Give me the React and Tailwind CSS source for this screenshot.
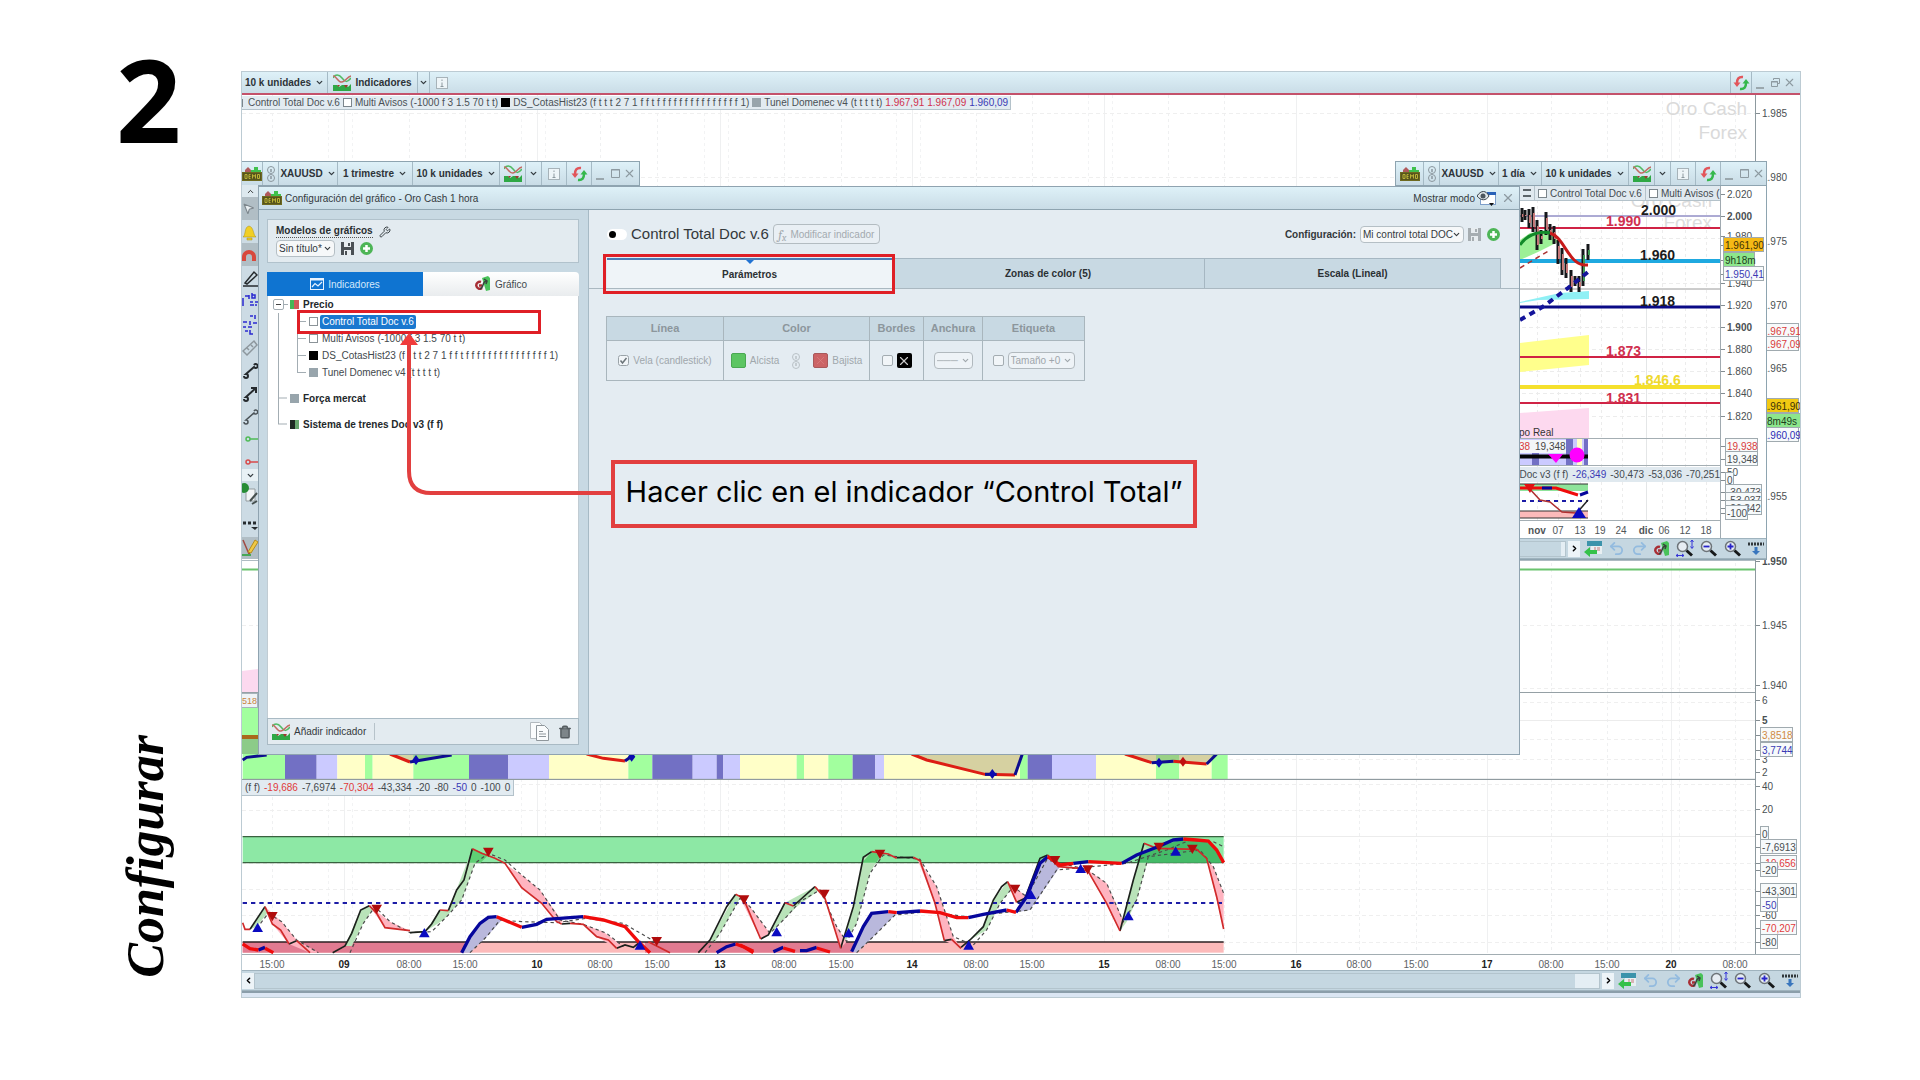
import React from 'react'
import {
  ChevronDown,
  ChevronUp,
  ChevronRight,
  ChevronLeft,
  Wrench,
  Trash2,
  X,
  Undo2,
  Redo2,
  MousePointer2,
} from 'lucide-react'

// ---------------------------------------------------------------------
// Small pixel icons of the trading platform
// ---------------------------------------------------------------------
const DemoIcon = () => (
  <svg width="20" height="16" viewBox="0 0 20 16" className="shrink-0">
    <path d="M3 8V4l3-3 3 3v4z" fill="#b05a5c" />
    <path d="M9 7V4h3V1h4v3h3v3z" fill="#3fc14d" />
    <rect x="0.5" y="6.5" width="19" height="8" fill="#57541c" stroke="#6e6a1f" />
    <path d="M3 8.500v4h2v-4zM8.500 8.500H7v4h1.500M7 10.500h1.500M10.500 12.500v-4l1.500 2 1.500-2v4M15.500 8.500h2v4h-2z" fill="none" stroke="#b9b236" />
  </svg>
)

const LinkIcon = ({ className = 'text-[#8b979e]' }) => (
  <svg width="10" height="16" viewBox="0 0 10 16" fill="none" stroke="currentColor" className={`shrink-0 ${className}`}>
    <circle cx="5" cy="4" r="3.500" />
    <circle cx="5" cy="12" r="3.500" />
    <path d="M5 3v3M5 10v3" strokeWidth="1.500" />
  </svg>
)

const IndicatorIcon = () => (
  <svg width="18" height="17" viewBox="0 0 18 17" className="shrink-0">
    <path d="M0 4C2 0 6 0 9 4s5 5 9 0" fill="none" stroke="#52bb64" strokeWidth="1.500" />
    <path d="M0 2c3-1 5 7 9 6s5-5 9-6" fill="none" stroke="#c46a63" strokeWidth="1.500" />
    <path d="M0 11h4l2 2 3-2h4l2 2 3-3v7H0z" fill="#2fa845" />
    <path d="M4 11h3l-1.500 2zM11 11h4l-2 3z" fill="#9e3a30" />
  </svg>
)

const InfoIcon = () => (
  <svg width="12" height="12" viewBox="0 0 12 12" className="shrink-0">
    <rect x="0.5" y="0.5" width="11" height="11" fill="#eef5f8" stroke="#a7b3b9" />
    <path d="M6 2.500v1.500M6 5.500v4M4.500 9.500h3" stroke="#8d999f" />
  </svg>
)

const RefreshIcon = () => (
  <svg width="17" height="16" viewBox="0 0 17 16" fill="none" strokeWidth="2.500" className="shrink-0">
    <path d="M10 2C5.500 1.500 4 4 4 8" stroke="#e2555b" />
    <path d="M0.500 7.500h7L4 12z" fill="#e2555b" stroke="none" />
    <path d="M7 14c4.500.5 6-2 6-6" stroke="#35b84c" />
    <path d="M9.500 8.500h7L13 4z" fill="#35b84c" stroke="none" />
  </svg>
)

const SaveIcon = ({ className = 'text-[#4a5055]' }) => (
  <svg width="13" height="13" viewBox="0 0 13 13" className={`shrink-0 ${className}`}>
    <path d="M0 0h13v13H0z" fill="currentColor" />
    <path d="M3 0h7v5H3zM3 8h7v5H3z" fill="#e8edf0" />
    <path d="M7 1h2v3H7zM4 9h2v4H4z" fill="currentColor" />
  </svg>
)

const AddIcon = () => (
  <svg width="13" height="13" viewBox="0 0 13 13" className="shrink-0">
    <circle cx="6.500" cy="6.500" r="6.500" fill="#4db556" />
    <path d="M6.500 3v7M3 6.500h7" stroke="#fff" strokeWidth="2.500" />
  </svg>
)

const GearLinkIcon = () => (
  <svg width="16" height="16" viewBox="0 0 16 16" className="shrink-0">
    <path d="M7 2l6-2 2 2v12l-4 1z" fill="#49c25a" />
    <path d="M6 6a3.500 3.500 0 1 0 1 6M4 9.500h3" fill="none" stroke="#a82f35" strokeWidth="2.500" />
    <path d="M5 13c4-1 2-7 6-8M9 3l3 2-1 3" fill="none" stroke="#39423d" strokeWidth="1.500" />
  </svg>
)

const CalendarBackIcon = () => (
  <svg width="18" height="16" viewBox="0 0 18 16" className="shrink-0">
    <rect x="3" y="0" width="15" height="5" fill="#3c93ab" />
    <rect x="7" y="5" width="11" height="8" fill="#e9eff2" />
    <path d="M10 7h2M10 9h2M13 7h3M13 9h3" stroke="#c97b7b" />
    <path d="M0 11l6-5v3h7v4H6v3z" fill="#35c14a" />
  </svg>
)

const Magnifier = ({ sign }) => (
  <svg width="18" height="17" viewBox="0 0 18 17" className="shrink-0">
    <circle cx="6.500" cy="6.500" r="5" fill="#e6edf3" stroke="#6d7479" strokeWidth="1.500" />
    <path d="M10.500 10.500l5.500 5" stroke="#17191a" strokeWidth="3" />
    {sign && <path d={sign === '+' ? 'M3.500 6.500h6M6.500 3.500v6' : 'M3.500 6.500h6'} stroke="#2723c9" strokeWidth="1.800" />}
    {!sign && <path d="M16 0v8M14.500 2L16 0l1.500 2M14.500 6.500L16 8.500l1.500-2M0 15.500h8M2 14l-2 1.500L2 17M6 14l2 1.500L6 17" fill="none" stroke="#3535d8" />}
  </svg>
)

const DockIcon = () => (
  <svg width="16" height="14" viewBox="0 0 16 14" className="shrink-0">
    <path d="M0 2h16" stroke="#30373b" strokeWidth="3" strokeDasharray="2 1" />
    <path d="M6.500 5h3v4h2.500l-4 4-4-4h2.500z" fill="#3976bd" />
  </svg>
)

const DocsIcon = () => (
  <svg width="20" height="20" viewBox="0 0 20 20" fill="#fafcfd" stroke="#b3babf" className="shrink-0">
    <path d="M0.500 0.500h9l3 3v13h-12z" />
    <path d="M6.500 3.500h8l4 4v11h-12z" stroke="#8f979c" />
    <path d="M9 9.500h4M9 12h7M9 14.500h7" stroke="#8f979c" />
  </svg>
)

const EyeWindowIcon = () => (
  <svg width="20" height="15" viewBox="0 0 20 15" className="shrink-0">
    <rect x="3.500" y="2.500" width="15" height="11" fill="#fff" stroke="#7e9ec9" />
    <path d="M10 2.500h9" stroke="#2a62b8" strokeWidth="3" />
    <path d="M0 5c4-6 9-6 12 0-3 5-8 5-12 0z" fill="#dfe5e8" stroke="#39424a" />
    <circle cx="6" cy="5" r="2.500" fill="#4d565d" />
    <path d="M12 12h5l-2.500 3z" fill="#111" />
  </svg>
)

const ChartTabIcon = () => (
  <svg width="14" height="12" viewBox="0 0 14 12" fill="none" stroke="#e8f3ff" className="shrink-0">
    <rect x="0.500" y="0.500" width="13" height="11" />
    <path d="M0 1.500h14" strokeWidth="2" />
    <path d="M2 9l3-3.500 3 2.500 4-4" strokeWidth="1.200" />
  </svg>
)

// ---------------------------------------------------------------------
// Toolbars
// ---------------------------------------------------------------------
const Cell = ({ className = '', label, children }) => (
  <button
    type="button"
    aria-label={label}
    className={`flex h-full shrink-0 items-center justify-center border-r border-[#a5bac5] text-[10px] font-bold text-[#2d3338] ${className}`}
  >
    {children}
  </button>
)

const Caret = () => <ChevronDown size={9} strokeWidth={3.500} className="shrink-0 text-[#333b40]" />

const WindowButtons = ({ restored }) => (
  <div className="flex h-full items-center gap-0.5 px-1 text-[#8d9aa1]">
    <button type="button" aria-label="Minimizar" className="flex h-3 w-3 items-end">
      <span className="h-0.5 w-2 bg-[#9aa7ad]" />
    </button>
    <button type="button" aria-label="Maximizar">
      <svg width="11" height="11" viewBox="0 0 11 11" fill="none" stroke="currentColor">
        {restored ? <path d="M3.500 3V1.500h6v5H8M1.500 4.500h6v5h-6zM1 5h7" /> : <path d="M1.500 1.500h8v8h-8zM1 2h9" />}
      </svg>
    </button>
    <button type="button" aria-label="Cerrar">
      <X size={13} strokeWidth={2} />
    </button>
  </div>
)

const ChartToolbar = ({ period, demoWidth, periodWidth }) => (
  <div className="flex h-6 shrink-0 items-center border-b border-[#8ea4b0] bg-linear-to-b from-[#def1f8] to-[#c9dce6]">
    <Cell label="Demo" className={`${demoWidth} overflow-hidden`}><DemoIcon /></Cell>
    <Cell label="Vincular" className="w-4"><LinkIcon /></Cell>
    <Cell className="w-[59px] gap-1">XAUUSD <Caret /></Cell>
    <Cell className={`${periodWidth} gap-1`}>{period} <Caret /></Cell>
    <Cell className="w-[87px] gap-1">10 k unidades <Caret /></Cell>
    <Cell label="Indicadores" className="w-[26px]"><IndicatorIcon /></Cell>
    <Cell label="Más indicadores" className="w-4"><Caret /></Cell>
    <Cell label="Información" className="w-[25px]"><InfoIcon /></Cell>
    <Cell label="Actualizar" className="w-[25px]"><RefreshIcon /></Cell>
    <WindowButtons />
  </div>
)

const NavigationBar = ({ first }) => (
  <div className="flex h-[21px] shrink-0 items-center border-y border-[#9fb3be] bg-[#c5d7e1]">
    {first && (
      <button type="button" aria-label="Atrás" className="flex h-4 w-3 items-center justify-center bg-[#edf4f8]">
        <ChevronLeft size={9} strokeWidth={4} />
      </button>
    )}
    <div className="flex h-4 min-w-0 flex-1 justify-end border border-[#b3c4cd]">
      <span className={`bg-[#e4eef4] ${first ? 'w-6' : 'w-1'}`} />
    </div>
    <button type="button" aria-label="Adelante" className="ml-0.5 flex h-4 w-3 items-center justify-center bg-[#edf4f8]">
      <ChevronRight size={9} strokeWidth={4} />
    </button>
    <div className="flex items-center gap-[6px] pr-0.5 pl-1">
      <CalendarBackIcon />
      <Undo2 size={17} strokeWidth={2.500} className="text-[#93bbdf]" />
      <Redo2 size={17} strokeWidth={2.500} className="text-[#93bbdf]" />
      <GearLinkIcon />
      <Magnifier />
      <Magnifier sign="-" />
      <Magnifier sign="+" />
      <DockIcon />
    </div>
  </div>
)

const Swatch = ({ className }) => <span className={`inline-block h-[9px] w-[9px] shrink-0 ${className}`} />

// ---------------------------------------------------------------------
// Chart data
// ---------------------------------------------------------------------
const TIME_LABELS = [
  [272, '15:00'], [344, '09'], [409, '08:00'], [465, '15:00'], [537, '10'], [600, '08:00'],
  [657, '15:00'], [720, '13'], [784, '08:00'], [841, '15:00'], [912, '14'], [976, '08:00'],
  [1032, '15:00'], [1104, '15'], [1168, '08:00'], [1224, '15:00'], [1296, '16'], [1359, '08:00'],
  [1416, '15:00'], [1487, '17'], [1551, '08:00'], [1607, '15:00'], [1671, '20'], [1735, '08:00'],
]

const GRID_ROWS = [113, 177, 241, 305, 368, 432, 496, 625, 688, 702, 739, 759, 784, 810, 863, 889, 915, 942]

const GREEN = '#a2ff9e'
const PURPLE = '#7270c4'
const LILAC = '#cbcaff'
const YELLOW = '#ffffc8'
const ZONES = [
  [8, GREEN], [135, PURPLE], [230, LILAC], [292, YELLOW], [375, GREEN], [398, YELLOW], [520, GREEN],
  [687, PURPLE], [805, LILAC], [927, YELLOW], [1165, GREEN], [1237, PURPLE], [1358, LILAC],
  [1430, PURPLE], [1450, LILAC], [1500, YELLOW], [1670, GREEN], [1692, YELLOW], [1765, GREEN],
  [1838, PURPLE], [1906, LILAC], [1932, YELLOW], [2340, GREEN], [2363, PURPLE], [2436, LILAC],
  [2568, YELLOW], [2748, GREEN], [2818, YELLOW], [2915, GREEN], [2963, null],
]

const FAST_UP = [
  '30,568 75,500', '147,612 170,602', '278,638 315,618 335,580 362,510 388,497',
  '510,578 555,575 575,552 600,510', '625,512 650,450 672,420 697,326', '965,552 990,550',
  '1130,625 1155,615 1180,622 1200,606', '1375,638 1410,600 1460,500 1487,463',
  '1562,597 1585,585 1635,488', '1660,498 1725,440', '1802,625 1840,500 1870,352 1895,335',
  '1970,353 2020,352', '2113,602 2135,598', '2163,622 2190,600 2230,560 2260,480 2285,440 2303,425',
  '2330,487 2355,475 2400,355 2423,345', '2640,573 2680,420 2712,310',
]
const FAST_DOWN = [
  '8,548 15,568 30,568', '75,500 97,552 122,570 147,612', '170,602 210,638',
  '388,497 410,520 435,563 510,572', '600,510 625,512',
  '697,326 725,340 765,355 795,370 845,443 905,490 950,545 965,552',
  '990,550 1030,553 1070,590 1105,600 1130,625', '1225,605 1290,638', '1487,463 1510,475 1562,597',
  '1635,488 1660,498', '1725,440 1755,475 1802,625', '1895,335 1945,342 1970,355',
  '2020,352 2040,362 2085,490 2113,602', '2135,598 2163,625', '2303,425 2330,487',
  '2423,345 2455,380 2520,385 2545,395 2600,490 2640,573',
  '2712,310 2750,325 2870,328 2900,355 2930,470 2951,567',
]
const SIGNAL = [
  '50,565 85,520 125,545 170,600 235,638', '330,638 370,550 405,500 450,545 510,578 575,575 625,525 665,480 705,370 745,340 795,360 845,405 900,450 960,540 1030,553 1100,580 1150,620',
  '690,638 740,590 780,540 845,545 950,548 1040,535 1150,550 1245,605', '1395,638 1440,580 1500,475 1530,500 1590,580 1640,530 1680,485 1740,450 1790,560 1820,605 1850,550 1890,400 1930,345 2040,358 2090,440 2140,590 2200,615 2240,570 2280,490 2320,440 2360,470 2420,360 2540,388 2600,430 2650,545 2690,480 2725,350 2880,330 2920,380 2951,460',
  '1850,638 1900,590 1965,525 2060,515 2180,530 2320,515 2370,510 2450,390 2660,370 2780,330 2850,300 2920,305 2951,320',
]
const SLOW_UP = [
  '55,630 75,622', '665,638 690,590 720,550 745,532 770,530', '845,562 890,553 920,538 1030,530',
  '1430,638 1460,620 1487,612', '1600,635 1630,622', '1680,632 1700,632 1730,622',
  '1835,635 1870,560 1895,520 1945,515', '1970,518 2040,513', '2185,533 2230,523 2300,510',
  '2328,517 2360,470 2400,370 2423,350', '2500,370 2545,365', '2645,370 2690,345 2750,322 2800,300 2830,297',
]
const SLOW_DOWN = [
  '8,612 30,626 55,630', '75,625 100,638', '770,530 845,562', '1030,530 1090,540 1155,560 1195,605 1230,638',
  '1487,612 1510,620 1540,638', '1500,615 1540,634', '1630,624 1665,634', '1730,624 1770,636',
  '1945,515 1970,518', '2040,513 2100,518 2150,533 2185,533', '2300,510 2328,517',
  '2423,350 2460,375 2500,370', '2545,365 2645,370', '2830,297 2870,300 2905,303 2930,330 2951,368',
]
const FILL_UP = [
  '30,568 75,500 85,515 50,560', '315,618 362,510 388,497 400,505 370,550 335,618',
  '555,575 600,510 625,512 697,326 735,345 705,370 665,480 610,540', '1410,600 1487,463 1500,475 1440,580 1425,606',
  '1585,585 1635,488 1725,440 1735,452 1670,500 1640,530', '1802,625 1840,500 1870,352 1895,335 1915,355 1890,400 1850,550',
  '2190,600 2230,560 2260,480 2303,425 2320,440 2280,490 2240,570', '2640,573 2680,420 2712,310 2730,340 2690,480 2660,545',
]
const FILL_DOWN = [
  '75,500 97,552 147,612 210,638 235,638 170,600 125,545', '388,497 435,563 510,572 450,545',
  '745,340 795,370 845,443 905,490 950,545 970,548 900,450 845,405', '1030,553 1070,590 1130,625 1150,620 1090,575',
  '1495,463 1562,597 1590,580 1530,500', '1725,440 1755,475 1802,625 1820,605 1790,560 1745,460',
  '2030,352 2085,490 2113,602 2163,625 2140,590 2090,440', '2303,425 2330,487 2360,470',
  '2543,390 2600,490 2640,573 2652,545 2600,430', '2870,328 2900,355 2951,567 2951,460 2920,380',
]
const SELL_MARKS = [[97, 530], [410, 508], [745, 337], [1250, 605], [1512, 480], [1753, 463], [1920, 343], [2325, 448], [2445, 362], [2543, 390], [2757, 322], [2857, 328]]
const BUY_MARKS = [[53, 562], [553, 578], [1200, 615], [1610, 575], [1826, 578], [2186, 615], [2373, 463], [2522, 385], [2665, 527], [2807, 333]]

const Lines = ({ items, ...rest }) => items.map((points) => <polyline key={points} points={points} fill="none" {...rest} />)
const Areas = ({ items, fill }) => items.map((points) => <polygon key={points} points={points} fill={fill} />)

// The chart data is stored at three units per pixel.
const Oscillator = () => (
  <g transform="translate(240 740) scale(0.33333)">
    {ZONES.slice(0, -1).map(([x, color], i) => (
      <rect key={x} x={x} y="42" width={ZONES[i + 1][0] - x} height="75" fill={color} />
    ))}
    <polygon points="2015,42 2060,60 2235,103 2325,105 2345,42" fill="#8a7a5a" fillOpacity="0.35" />
    <polygon points="450,42 510,66 635,45 640,42" fill="#6a7a5a" fillOpacity="0.3" />
    <polygon points="2655,42 2735,68 2900,72 2930,42" fill="#8a7a5a" fillOpacity="0.35" />
    <Lines items={['450,42 510,66', '1040,42 1090,55 1155,63', '2015,42 2060,60 2235,103 2325,105', '2655,42 2735,68', '2800,64 2900,72']} stroke="#dd1d14" strokeWidth="9" />
    <Lines items={['8,60 20,52 80,45', '510,66 635,45', '1155,63 1180,45', '2235,103 2270,103', '2325,105 2347,42', '2735,68 2800,64', '2900,72 2930,42']} stroke="#0d0d8f" strokeWidth="9" />
    {[[528, 60], [1175, 50], [2257, 102], [2757, 68]].map(([x, y]) => (
      <path key={x} d={`M${x} ${y - 15}l11 15-11 15-11-15z`} fill="#0b0bb0" />
    ))}
    <path d="M2829 50l11 15-11 15-11-15z" fill="#c01010" />
    <path d="M8 118h5000" stroke="#8f9a9f" strokeWidth="3" />

    <rect x="8" y="290" width="2943" height="78" fill="#8de8a5" />
    <rect x="8" y="606" width="2943" height="32" fill="#fcbaba" />
    <rect x="8" y="606" width="665" height="32" fill="#e17b91" />
    <rect x="1215" y="606" width="625" height="32" fill="#e17b91" />
    <path d="M8 290h2943M8 368h2943" stroke="#39613f" strokeWidth="4" />
    <path d="M8 606h2943" stroke="#2a2022" strokeWidth="4" />
    <Areas items={FILL_UP} fill="#b9e3b9" />
    <Areas items={FILL_DOWN} fill="#ffb4c0" />
    <Areas items={['697,326 685,368 722,368 745,345', '1895,335 1866,368 1908,368 1925,345']} fill="#5fcf74" />
    <Areas items={['665,638 690,590 720,550 745,532 790,535 740,590 690,638', '1835,635 1870,560 1895,520 1970,520 1900,590 1850,638', '2328,517 2360,470 2400,370 2423,350 2460,380 2370,510']} fill="#b9b8dc" />
    <Areas items={['2700,345 2750,322 2830,297 2900,305 2930,330 2945,368 2690,368']} fill="#45bb68" />
    <path d="M8 489h2943" stroke="#1c1ca6" strokeWidth="6" strokeDasharray="13 12" />
    <Lines items={SIGNAL} stroke="#4a4a4a" strokeWidth="3.500" strokeDasharray="10 9" />
    <Lines items={FAST_UP} stroke="#1c211c" strokeWidth="5" />
    <Lines items={FAST_DOWN} stroke="#d02a2a" strokeWidth="5" />
    <Lines items={SLOW_UP} stroke="#06069c" strokeWidth="10" />
    <Lines items={SLOW_DOWN} stroke="#f00b0b" strokeWidth="10" />
    {SELL_MARKS.map(([x, y]) => <path key={x} d={`M${x - 16} ${y - 14}h32l-16 28z`} fill="#b00c0c" />)}
    {BUY_MARKS.map(([x, y]) => <path key={x} d={`M${x - 16} ${y + 14}h32l-16-28z`} fill="#0a0ac0" />)}
  </g>
)

const MainPlot = () => (
  <svg className="h-full w-full" fontFamily="Liberation Sans, Arial, sans-serif">
    <g transform="translate(-242 -95)">
      {TIME_LABELS.map(([x, label]) => (
        <path key={x} d={`M${x}.500 95v858`} stroke="#eff0f1" strokeDasharray={label.includes(':') ? '3 3' : undefined} />
      ))}
      {[328, 352, 521, 545, 704, 728, 896, 920, 1088, 1112, 1662, 1679].map((x) => (
        <path key={x} d={`M${x}.500 95v858`} stroke="#f2f3f4" strokeDasharray="3 3" />
      ))}
      {GRID_ROWS.map((y) => <path key={y} d={`M242 ${y}.500h3000`} stroke="#efefef" strokeDasharray="4 3" />)}
      <path d="M242 720.500h3000M242 836.500h3000" stroke="#ececec" />
      <path d="M242 560.500h3000" stroke="#aebbc2" />
      <path d="M242 569.500h3000" stroke="#6bc46f" strokeWidth="2" />
      <path d="M242 692.500h3000M242 779.500h3000" stroke="#95a0a5" />
      <path d="M242 671l16-2v23h-16z" fill="#fcd9ef" />
      <rect x="242" y="708" width="16" height="46" fill={GREEN} />
      <rect x="242" y="737" width="16" height="17" fill="#8ccb89" />
      <path d="M242 737h16" stroke="#a96a1b" strokeWidth="4" />
      <rect x="240.500" y="693.500" width="17" height="14" fill="#eef3f6" stroke="#a6b3ba" />
      <text x="242" y="704" fontSize="9" fill="#c98442">518</text>
      <Oscillator />
    </g>
  </svg>
)

const MAIN_SCALE = [
  { y: 113, t: '1.985' }, { y: 177, t: '1.980' }, { y: 241, t: '1.975' }, { y: 305, t: '1.970' }, { y: 368, t: '1.965' },
  { y: 331, t: '1.967,91', c: '#d93a3a', box: '#f7fafb', w: 38 }, { y: 344, t: '1.967,09', c: '#d93a3a', box: '#f7fafb', w: 38 },
  { y: 406, t: '1.961,90', c: '#3b3008', box: '#f2c912', w: 38 }, { y: 421, t: '8m49s', c: '#1d3d1d', box: '#8de68c', w: 35, x: 11 },
  { y: 435, t: '1.960,09', c: '#2b2bb5', box: '#f7fafb', w: 38 }, { y: 496, t: '1.955' }, { y: 561, t: '1.950', bold: true },
  { y: 625, t: '1.945' }, { y: 685, t: '1.940' }, { y: 700, t: '6' }, { y: 720, t: '5', bold: true }, { y: 759, t: '3' },
  { y: 735, t: '3,8518', c: '#d08a42', box: '#f7fafb', w: 32 }, { y: 750, t: '3,7744', c: '#3a3ab5', box: '#f7fafb', w: 32 },
  { y: 772, t: '2' }, { y: 786, t: '40' }, { y: 809, t: '20' }, { y: 834, t: '0', box: '#f7fafb', w: 8 },
  { y: 847, t: '-7,6913', box: '#f7fafb', w: 36 }, { y: 863, t: '-19,656', c: '#e23b3b', box: '#f7fafb', w: 36 },
  { y: 870, t: '-20', box: '#f7fafb', w: 17 }, { y: 915, t: '-60' }, { y: 891, t: '-43,301', box: '#f7fafb', w: 36 },
  { y: 905, t: '-50', c: '#3a3ab5', box: '#f7fafb', w: 17 }, { y: 928, t: '-70,207', c: '#e23b3b', box: '#f7fafb', w: 36 },
  { y: 942, t: '-80', box: '#f7fafb', w: 17 },
]

const DAILY_SCALE = [
  { y: 194, t: '2.020' }, { y: 216, t: '2.000', bold: true }, { y: 236, t: '1.980' }, { y: 283, t: '1.940' },
  { y: 245, t: '1.961,90', c: '#3b3008', box: '#f5b915', w: 40, x: 4 }, { y: 260, t: '9h18m', c: '#1d3d1d', box: '#8de68c', w: 31, x: 4 },
  { y: 274, t: '1.950,41', c: '#3a3ab5', box: '#f7fafb', w: 40, x: 4 }, { y: 305, t: '1.920' }, { y: 327, t: '1.900', bold: true },
  { y: 349, t: '1.880' }, { y: 371, t: '1.860' }, { y: 393, t: '1.840' }, { y: 416, t: '1.820' },
  { y: 446, t: '19,938', c: '#d93a3a', box: '#f7fafb', w: 32 }, { y: 459, t: '19,348', box: '#f7fafb', w: 32 },
  { y: 472, t: '50' }, { y: 480, t: '0', box: '#f7fafb', w: 8 }, { y: 492, t: '-30,473', box: '#f7fafb', w: 36 },
  { y: 500, t: '-53,037', box: '#f7fafb', w: 36 }, { y: 508, t: '-26,342', box: '#f7fafb', w: 36 },
  { y: 513, t: '-100', box: '#f7fafb', w: 22 },
]

const Scale = ({ items, offset }) => (
  <svg className="h-full w-full" fontFamily="Liberation Sans, Arial, sans-serif" fontSize="10">
    <g transform={`translate(0 ${-offset})`}>
      {items.map(({ y, t, c = '#4a4f52', box, w, bold, x = 6 }) => (
        <g key={t}>
          <path d={`M0 ${y}.500h4`} stroke="#848d92" />
          {box && <rect x={x - 1.5} y={y - 7.5} width={w} height="14" fill={box} stroke="#a0aaaf" />}
          <text x={x} y={y + 4} fill={c} fontWeight={bold ? 700 : 400}>{t}</text>
        </g>
      ))}
    </g>
  </svg>
)

const TimeAxis = () => (
  <svg className="h-4 w-full" fontFamily="Liberation Sans, Arial, sans-serif" fontSize="10" fill="#4f5558">
    <path d="M0 0.500h3000" stroke="#a2adb2" />
    <g transform="translate(-242 0)" textAnchor="middle">
      {TIME_LABELS.map(([x, label]) => (
        <text key={x} x={x} y="14" fontWeight={label.includes(':') ? 400 : 700} fill={label.includes(':') ? '#5c6265' : '#222'}>{label}</text>
      ))}
    </g>
  </svg>
)

// ---------------------------------------------------------------------
// Daily chart window
// ---------------------------------------------------------------------
const LEVELS = [
  [216, '#5a56a8', 1], [228, '#d02345', 2], [261, '#1fa9e0', 4], [289, '#9a9a9a', 1], [307, '#0a0a86', 3],
  [357, '#d02345', 2], [387, '#f5e02c', 4], [403, '#d02345', 2],
]
const LEVEL_LABELS = [
  [1641, 215, '2.000', '#1c1c1c'], [1606, 226, '1.990', '#d0304f'], [1640, 260, '1.960', '#1c1c1c'], [1640, 306, '1.918', '#1c1c1c'],
  [1606, 356, '1.873', '#d0304f'], [1634, 385, '1.846.6', '#efd92e'], [1606, 403, '1.831', '#d0304f'],
]
const CANDLES = [
  [1522, 208, 222], [1525, 210, 220], [1529, 209, 228], [1533, 207, 232], [1537, 220, 250], [1541, 230, 244], [1546, 212, 235],
  [1550, 224, 240], [1554, 226, 244], [1558, 240, 264], [1562, 248, 275], [1566, 258, 278], [1571, 270, 292], [1575, 276, 286],
  [1579, 276, 292], [1583, 249, 286], [1588, 244, 260],
]

const DailyPlot = () => (
  <svg className="h-full w-full" fontFamily="Liberation Sans, Arial, sans-serif">
    <g transform="translate(-1396 -186)">
      {[1537, 1558, 1580, 1601, 1622, 1662, 1685, 1706].map((x) => <path key={x} d={`M${x}.500 200v320`} stroke="#ececec" strokeDasharray="3 3" />)}
      {[238, 283, 327, 349, 371, 393, 416].map((y) => <path key={y} d={`M1396 ${y}.500h326`} stroke="#ececec" strokeDasharray="4 3" />)}
      <path d="M1646.500 200v320" stroke="#e4e6e7" />
      <text x="1712" y="207" fontSize="19" fill="#dcdcdc" textAnchor="end">Oro Cash</text>
      <text x="1712" y="229" fontSize="19" fill="#dcdcdc" textAnchor="end">Forex</text>
      <path d="M1520 240l10-7 22-3 6 12-20 10-18 8z" fill="#9cf096" />
      <path d="M1520 302l40-9 29-2v8l-50 1-19 3z" fill="#8ff0f5" />
      <path d="M1520 343l69-8v30l-69 7z" fill="#ffff8c" />
      <path d="M1520 413l69-5v30h-69z" fill="#fdd9ef" />
      {LEVELS.map(([y, color, w]) => <path key={y} d={`M1396 ${y}h326`} stroke={color} strokeWidth={w} />)}
      {CANDLES.map(([x, top, bottom], i) => (
        <g key={x}>
          <path d={`M${x} ${top}V${bottom}`} stroke="#15171a" strokeWidth="3" />
          <path d={`M${x + 1} ${top + 6}V${bottom - 5}`} stroke={i > 14 ? '#3f9a54' : '#c57878'} strokeWidth="2" />
        </g>
      ))}
      <path d="M1520 245c8-12 22-14 30-12" fill="none" stroke="#128a2a" strokeWidth="3" />
      <path d="M1550 233c14 4 18 30 34 32h4" fill="none" stroke="#c71a1a" strokeWidth="3" />
      <path d="M1520 268l30-18" stroke="#a33" strokeWidth="1.500" strokeDasharray="5 4" />
      <path d="M1520 320l24-14 24-18 20-16" fill="none" stroke="#14149a" strokeWidth="4" strokeDasharray="6 5" />
      <g fontSize="14" fontWeight="700">
        {LEVEL_LABELS.map(([x, y, t, color]) => <text key={t} x={x} y={y} fill={color}>{t}</text>)}
      </g>
      <text x="1519" y="436" fontSize="10" fill="#333">po Real</text>

      <path d="M1396 438.500h326M1396 465.500h326M1396 520.500h326" stroke="#a4aeb3" />
      <rect x="1520" y="439" width="68" height="26" fill={LILAC} />
      <path d="M1532 453h7v12h-7zM1566 439h7v26h-7zM1584 439h4v26h-4z" fill={PURPLE} />
      <rect x="1577" y="439" width="5" height="26" fill={YELLOW} />
      <rect x="1520" y="440" width="46" height="13" fill="#f3f6f8" />
      <text x="1519" y="450" fontSize="10" fill="#d93a3a">38</text>
      <text x="1535" y="450" fontSize="10" fill="#444">19,348</text>
      <path d="M1520 456.500h68" stroke="#050505" strokeWidth="4" />
      <path d="M1548 454h15l-7 9z" fill="#f0f" />
      <circle cx="1577" cy="455" r="7.500" fill="#f0f" />

      <rect x="1520" y="484" width="68" height="7" fill="#8ee39a" />
      <rect x="1520" y="511" width="68" height="7" fill="#fcbaba" />
      <path d="M1520 484h68M1520 511h68M1520 518h68" stroke="#333" />
      <path d="M1522 501h66" stroke="#1c1ca6" strokeWidth="2" strokeDasharray="4 4" />
      <path d="M1528 487l12 13 10 2 12 10 14 1" fill="none" stroke="#b03030" strokeWidth="1.500" />
      <path d="M1576 514l12-14" stroke="#222" strokeWidth="1.500" />
      <path d="M1520 488h36l22 7" fill="none" stroke="#f00b0b" strokeWidth="3" />
      <path d="M1542 488h10M1580 495l8-3" stroke="#06069c" strokeWidth="3" />
      <path d="M1572 518h14l-7-11z" fill="#0a0ac0" />
      <path d="M1524 484h11l-5 9z" fill="#e01010" />

      <g fontSize="10" fill="#4f5558" textAnchor="middle">
        {[[1537, 'nov'], [1558, '07'], [1580, '13'], [1600, '19'], [1621, '24'], [1646, 'dic'], [1664, '06'], [1685, '12'], [1706, '18']].map(([x, t]) => (
          <text key={t} x={x} y="534" fontWeight={t.length > 2 ? 700 : 400}>{t}</text>
        ))}
      </g>
    </g>
  </svg>
)

const DailyWindow = () => (
  <section className="absolute top-[89px] right-[33px] flex h-[399px] w-[372px] flex-col border border-[#8ea4b0] bg-white">
    <ChartToolbar period="1 día" demoWidth="w-7" periodWidth="w-[43px]" />
    <div className="flex min-h-0 flex-1">
      <div className="relative min-w-0 flex-1 border-r border-[#a0aab0]">
        <DailyPlot />
        <div className="absolute top-0 right-0 flex h-[15px] w-[203px] items-center gap-[3px] overflow-hidden border-b border-[#b4c2ca] bg-[#e0e9ef] text-[10px] whitespace-nowrap text-[#444b50]">
          <span className="ml-1.5 h-2 w-2 shrink-0 border-y-2 border-[#5b6368]" />
          <span className="h-full w-px shrink-0 bg-[#b4c2ca]" />
          <Swatch className="border border-[#7c868c] bg-white" />
          Control Total Doc v.6
          <span className="h-full w-px shrink-0 bg-[#b4c2ca]" />
          <Swatch className="border border-[#7c868c] bg-white" />
          Multi Avisos (
        </div>
        <div className="absolute right-0 bottom-[56px] flex h-[15px] items-center gap-1 bg-[#e0e9ef] text-[10px] whitespace-nowrap text-[#444b50]">
          <span>Doc v3 (f f)</span>
          <span className="text-[#3a3ab5]">-26,349</span>
          <span>-30,473</span>
          <span>-53,036</span>
          <span>-70,251</span>
        </div>
      </div>
      <div className="w-[45px] shrink-0">
        <Scale items={DAILY_SCALE} offset={186} />
      </div>
    </div>
    <NavigationBar />
  </section>
)

// ---------------------------------------------------------------------
// Drawing tools palette (partly hidden under the dialog)
// ---------------------------------------------------------------------
const stroke = (d, color = '#262b2e', width = 2) => <path d={d} fill="none" stroke={color} strokeWidth={width} />
const TOOLS = [
  { name: 'Cursor', on: true, art: null },
  { name: 'Alerta', art: <path d="M1 16c3-2 1-10 6-11 5 1 4 9 7 11zM5 17h5v2H5z" fill="#f1cf25" stroke="#a98f16" strokeWidth="0.500" /> },
  { name: 'Imán', on: true, art: stroke('M2 17v-4a5 5 0 0 1 10 0v4', '#d8483c', 4) },
  { name: 'Lápiz', art: stroke('M1 19h15M3 16l9-11 3 3-10 9z', '#262b2e', 1.5) },
  { name: 'Letras', art: stroke('M1 8v8M3 6h4M7 5v4M10 3v5h3V5h-3M8 15h4M8 12h3M13 12h3M13 15h2', '#2a2ad0', 1.5) },
  { name: 'Cifras', art: stroke('M8 3h3M13 2v4M1 9h4M8 8v4M11 10h4M1 14h3M6 14h4M3 18h3M8 17v4h3', '#2a2ad0', 1.5) },
  { name: 'Regla', art: stroke('M1 15L12 5l3 4L5 19zM5 12l2 2M9 9l2 2', '#8d979d', 1.5) },
  { name: 'Segmento', art: stroke('M2 17a2 2 0 1 0 2-2L12 8a2 2 0 1 0 0-2') },
  { name: 'Flecha', art: stroke('M2 17a2 2 0 1 0 2-2L14 6M9 6h5v5') },
  { name: 'Recta', art: stroke('M2 17a2 2 0 1 0 2-2L12 8a2 2 0 1 0 0-2', '#4a5257', 1.5) },
  { name: 'Horizontal', art: stroke('M8 11a2 2 0 1 0-4 0 2 2 0 1 0 4 0h9', '#4fbc57', 1.5) },
  { name: 'Nivel', art: stroke('M8 11a2 2 0 1 0-4 0 2 2 0 1 0 4 0h9', '#d84b4b', 1.5) },
]

const ToolPalette = () => (
  <div className="absolute top-[113px] left-0 flex w-4 flex-col overflow-hidden bg-[#ccdbe4]">
    <button type="button" aria-label="Subir" className="flex h-3 items-center justify-center bg-[#dde9ef]"><ChevronUp size={9} /></button>
    {TOOLS.map(({ name, on, art }) => (
      <button key={name} type="button" aria-label={name} className={`flex h-[23px] shrink-0 items-center ${on ? 'bg-[#b1bec5]' : ''}`}>
        {art ? <svg width="16" height="22" viewBox="0 0 16 22">{art}</svg> : <MousePointer2 size={13} className="text-[#7c868c]" fill="#e8eef1" />}
      </button>
    ))}
    <button type="button" aria-label="Bajar" className="-mt-1 flex h-3 items-center justify-center bg-[#e8f1f5]"><Caret /></button>
    <svg width="16" height="56" viewBox="0 0 16 56">
      <path d="M4 8h9v12H4z" fill="#f2f5f6" stroke="#939c9f" />
      <circle cx="2" cy="7" r="5" fill="#278c35" />
      <path d="M8 20l7-8M10 23l5-3" stroke="#46504f" strokeWidth="2" />
      <path d="M1 42h15" stroke="#262b2e" strokeWidth="3" strokeDasharray="3 2" />
      <path d="M9 46h7l-3 3z" fill="#262b2e" />
    </svg>
    <svg width="16" height="22" viewBox="0 0 16 22" className="bg-[#b1bec5]">
      <path d="M1 3l6 14 3-6" fill="none" stroke="#a14a43" strokeWidth="1.500" />
      <path d="M6 15l7-12 3 2-7 11z" fill="#efc844" stroke="#b58c1c" />
      <path d="M0 18h9" stroke="#47a757" strokeWidth="2" />
    </svg>
  </div>
)

// ---------------------------------------------------------------------
// Configuration dialog
// ---------------------------------------------------------------------
const Dropdown = ({ label, value, className = '', muted }) => (
  <span className={`grid h-[17px] items-center rounded-sm border text-[10px] ${muted ? 'border-[#b1b9be] bg-[#eef3f7] text-[#9fa6ab]' : 'border-[#b5bfc5] bg-[#f6f8f9] text-[#33393d]'} ${className}`}>
    <select aria-label={label} defaultValue={value} className="col-start-1 row-start-1 w-full appearance-none bg-transparent pl-0.5 outline-none">
      <option>{value}</option>
    </select>
    <ChevronDown size={9} strokeWidth={3} className="pointer-events-none col-start-1 row-start-1 mr-0.5 justify-self-end" />
  </span>
)

const Branch = ({ last }) => (
  <svg className="h-full w-3 shrink-0" stroke="#a3adb3">
    <line x1="0.500" y1="0" x2="0.500" y2={last ? '50%' : '100%'} />
    <line x1="0" y1="50%" x2="9" y2="50%" />
  </svg>
)

const Lane = () => <span className="h-full w-[19px] shrink-0 border-l border-[#a3adb3]" />

const PRICE_INDICATORS = [
  { name: 'Control Total Doc v.6', swatch: 'border border-[#8b9398] bg-white', selected: true },
  { name: 'Multi Avisos (-1000 f 3 1.5 70 t t)', swatch: 'border border-[#8b9398] bg-white' },
  { name: 'DS_CotasHist23 (f t t t 2 7 1 f f t f f f f f f f f f f f f f f f 1)', swatch: 'bg-black' },
  { name: 'Tunel Domenec v4 (t t t t t)', swatch: 'bg-[#98a5ac]' },
]

const IndicatorTree = () => (
  <ul className="relative flex-1 overflow-hidden border-x border-[#c1ccd3] bg-white text-[10px] whitespace-nowrap text-[#42484c]">
    <li className="flex h-[17px] items-center pl-[5px] font-bold text-[#23282b]">
      <button type="button" aria-label="Contraer" className="flex h-[11px] w-[11px] items-center justify-center rounded-xs border border-[#a3adb3] bg-white">
        <span className="h-px w-[5px] bg-[#444]" />
      </button>
      <span className="mr-0.5 h-px w-1 bg-[#a3adb3]" />
      <Swatch className="mr-1 bg-linear-to-r from-[#45b756] from-50% to-[#d05a5a] to-50%" />
      Precio
    </li>
    {PRICE_INDICATORS.map(({ name, swatch, selected }, i) => (
      <li key={name} className="flex h-[17px] items-center pl-[10px]">
        <Lane />
        <Branch last={i === PRICE_INDICATORS.length - 1} />
        <Swatch className={`mr-0.5 ${swatch}`} />
        <span className={selected ? 'rounded-xs bg-[#1a78cf] px-0.5 py-px leading-3 text-white' : 'px-0.5'}>{name}</span>
      </li>
    ))}
    <li className="flex h-[34px] items-center pl-[10px] font-bold text-[#23282b]">
      <Branch />
      <Swatch className="mr-1 bg-[#98a5ac]" />
      Força mercat
    </li>
    <li className="flex h-[18px] items-center pl-[10px] font-bold text-[#23282b]">
      <Branch last />
      <Swatch className="mr-1 bg-linear-to-r from-[#1f2a22] from-60% to-[#69a76f] to-60%" />
      Sistema de trenes Doc v3 (f f)
    </li>
    <li aria-hidden="true" className="absolute top-[14px] left-[29px] h-6 w-[244px] border-3 border-[#df1f26]" />
  </ul>
)

const Sidebar = () => (
  <div className="flex w-[330px] shrink-0 flex-col border-r border-[#a7bac5] bg-[#c8d9e3] py-[9px] pr-[9px] pl-2">
    <div className="flex h-11 shrink-0 flex-col justify-center gap-0.5 border border-[#b1c2cc] bg-[#e3ebf0] pl-2">
      <div className="flex items-center gap-1.5">
        <span className="border-b border-dotted border-[#555] text-[10px] leading-3 font-bold text-[#2a2f32]">Modelos de gráficos</span>
        <Wrench size={12} className="text-[#3b4347]" />
      </div>
      <div className="flex items-center gap-[6px]">
        <Dropdown label="Modelos de gráficos" value="Sin título*" className="w-[59px]" />
        <SaveIcon />
        <AddIcon />
      </div>
    </div>
    <div className="mt-[9px] flex h-6 shrink-0 text-[10px]">
      <button type="button" className="flex w-1/2 items-center justify-center gap-1 bg-[#0f74d1] text-[#d3e8fb]">
        <ChartTabIcon /> Indicadores
      </button>
      <button type="button" className="flex w-1/2 items-center justify-center gap-1 rounded-tr-sm bg-linear-to-b from-white to-[#e9ecee] text-[#42484c]">
        <GearLinkIcon /> Gráfico
      </button>
    </div>
    <IndicatorTree />
    <div className="flex h-[27px] shrink-0 items-center border border-[#a9bac4] bg-[#e3ebf0] pl-1 text-[10px] text-[#33393d]">
      <button type="button" className="flex items-center gap-1 border-r border-[#b7c3ca] pr-2"><IndicatorIcon /> Añadir indicador</button>
      <button type="button" aria-label="Duplicar" className="mr-2 ml-auto"><DocsIcon /></button>
      <button type="button" aria-label="Eliminar" className="mr-1.5"><Trash2 size={14} strokeWidth={2.500} fill="#7d8589" className="text-[#565d61]" /></button>
    </div>
  </div>
)

const HEADINGS = [
  { name: 'Línea', width: 'w-[117px]' },
  { name: 'Color', width: 'w-[146px]' },
  { name: 'Bordes', width: 'w-[54px]' },
  { name: 'Anchura', width: 'w-[59px]' },
  { name: 'Etiqueta', width: 'w-[102px]' },
]

const ParameterTable = () => (
  <table className="mt-[27px] ml-[17px] table-fixed border-collapse text-[10px] text-[#a0a7ac]">
    <thead>
      <tr className="h-6 bg-[#c8d9e3] text-[11px] text-[#8c969c]">
        {HEADINGS.map(({ name, width }) => (
          <th key={name} scope="col" className={`border border-[#a9b6bd] p-0 font-bold ${width}`}>{name}</th>
        ))}
      </tr>
    </thead>
    <tbody>
      <tr className="h-10">
        <td className="border border-[#a9b6bd] p-0">
          <label className="flex items-center justify-center gap-1 whitespace-nowrap">
            <input type="checkbox" defaultChecked className="peer sr-only" />
            <svg width="11" height="11" viewBox="0 0 11 11" fill="none" className="shrink-0">
              <rect x="0.500" y="0.500" width="10" height="10" rx="2" fill="#f1f5f8" stroke="#9aa3a8" />
              <path d="M2.500 5.500l2 2.500 4-5" stroke="#6c757a" strokeWidth="1.500" />
            </svg>
            Vela (candlestick)
          </label>
        </td>
        <td className="border border-[#a9b6bd] p-0">
          <div className="flex items-center justify-center">
            <span className="mr-1 h-[15px] w-[15px] rounded-xs border border-[#4aa852] bg-[#5cc562]" />
            Alcista
            <LinkIcon className="mx-3 text-[#b9c1c6]" />
            <span className="mr-1 flex h-[15px] w-[15px] items-center justify-center rounded-xs border border-[#a9595b] bg-[#cc6466] text-[#dd8a8a]">
              <X size={13} strokeWidth={1} />
            </span>
            Bajista
          </div>
        </td>
        <td className="border border-[#a9b6bd] p-0">
          <div className="flex items-center justify-center gap-1">
            <input type="checkbox" aria-label="Bordes" className="h-[11px] w-[11px] appearance-none rounded-xs border border-[#a3acb1] bg-[#f1f5f8]" />
            <span className="flex h-[15px] w-[15px] items-center justify-center rounded-xs bg-black text-[#c9c9c9]"><X size={14} strokeWidth={2} /></span>
          </div>
        </td>
        <td className="border border-[#a9b6bd] p-0">
          <div className="flex justify-center">
            <Dropdown muted label="Anchura" value="───" className="w-[39px]" />
          </div>
        </td>
        <td className="border border-[#a9b6bd] p-0">
          <div className="flex items-center justify-center gap-1">
            <input type="checkbox" aria-label="Etiqueta" className="h-[11px] w-[11px] appearance-none rounded-xs border border-[#a3acb1] bg-[#f1f5f8]" />
            <Dropdown muted label="Tamaño" value="Tamaño +0" className="w-[67px]" />
          </div>
        </td>
      </tr>
    </tbody>
  </table>
)

const ConfigPanel = () => (
  <div className="relative min-w-0 flex-1 bg-[#e4ecf2]">
    <div className="flex h-12 items-center pr-[19px] pl-[18px] text-[10px]">
      <label className="flex items-center gap-1 text-[15px] text-[#33383b]">
        <input type="checkbox" role="switch" className="sr-only" />
        <span className="h-[11px] w-5 rounded-full bg-white p-0.5"><span className="block h-[7px] w-[7px] rounded-full bg-black" /></span>
        Control Total Doc v.6
      </label>
      <button type="button" className="ml-1 flex h-5 w-[107px] items-center justify-center gap-1 rounded-sm border border-[#b3bcc1] bg-[#e9eff4] text-[#a3aaaf]">
        <i className="font-serif text-[13px] leading-none">f<sub>x</sub></i> Modificar indicador
      </button>
      <span className="ml-auto font-bold text-[#33383b]">Configuración:</span>
      <Dropdown label="Configuración" value="Mi control total DOC" className="mx-1 w-[104px]" />
      <SaveIcon className="text-[#a6adb1]" />
      <span className="ml-1.5"><AddIcon /></span>
    </div>
    <div className="flex h-[31px] border-b border-[#aab8c1] px-[18px] text-[10px] font-bold text-[#2b3033]">
      <button type="button" className="relative w-[285px] border-t-2 border-[#4b7cb5] bg-[#eff4f8]">
        <svg width="8" height="4" className="absolute top-0 left-1/2 -ml-1"><path d="M0 0h8L4 4z" fill="#2273d3" /></svg>
        Parámetros
      </button>
      <button type="button" className="flex-1 border-t border-r border-[#a6b7c2] bg-[#c8d9e3]">Zonas de color (5)</button>
      <button type="button" className="w-[296px] border-t border-r border-[#a6b7c2] bg-[#c8d9e3]">Escala (Lineal)</button>
    </div>
    <ParameterTable />
    <div aria-hidden="true" className="absolute top-11 left-[14px] h-10 w-[292px] border-3 border-[#df1f26]" />
  </div>
)

const ConfigDialog = () => (
  <section role="dialog" aria-label="Configuración del gráfico" className="absolute top-[114px] right-[280px] left-4 flex h-[569px] flex-col border border-[#8fa3b0] bg-[#e4ecf2]">
    <header className="flex h-[23px] shrink-0 items-center border-b border-[#8ea4b0] bg-linear-to-b from-[#def1f8] to-[#c9dce6] pl-[3px] text-[10px] text-[#33393d]">
      <DemoIcon />
      <span className="ml-[3px]">Configuración del gráfico - Oro Cash 1 hora</span>
      <span className="ml-auto">Mostrar modo</span>
      <span className="mr-1 ml-0.5"><EyeWindowIcon /></span>
      <button type="button" aria-label="Cerrar" className="mr-1 text-[#8d9aa1]"><X size={14} /></button>
    </header>
    <div className="flex min-h-0 flex-1">
      <Sidebar />
      <ConfigPanel />
    </div>
    {/* Tutorial callout, pointing at the selected indicator */}
    <svg aria-hidden="true" className="absolute top-[146px] left-[140px] h-[170px] w-[214px]" fill="none" stroke="#e23f3f" strokeWidth="4">
      <path d="M10 10v128q0 22 22 22h182" />
      <path d="M10 0l9 12H1z" fill="#f03c3c" stroke="none" />
    </svg>
    <p className="absolute top-[273px] left-[352px] flex h-[68px] w-[586px] items-center justify-center border-4 border-[#e23f3f] bg-[#e4ecf2] pb-1 font-[Inter,sans-serif] text-[29px] whitespace-nowrap text-black">
      Hacer clic en el indicador “Control Total”
    </p>
  </section>
)

// ---------------------------------------------------------------------
// Hourly chart window
// ---------------------------------------------------------------------
const Legend = () => (
  <div className="absolute top-px left-0 flex h-[14px] items-center gap-[3px] border-r border-b border-[#b4c2ca] bg-[#e2ebf1] pr-0.5 text-[10px] whitespace-nowrap text-[#4a5156]">
    <span className="mr-0.5 h-2 w-px bg-[#7c868c]" />
    Control Total Doc v.6
    <Swatch className="border border-[#7c868c] bg-white" />
    Multi Avisos (-1000 f 3 1.5 70 t t)
    <Swatch className="bg-black" />
    DS_CotasHist23 (f t t t 2 7 1 f f t f f f f f f f f f f f f f f f 1)
    <Swatch className="bg-[#98a5ac]" />
    Tunel Domenec v4 (t t t t t)
    <span className="text-[#d0304f]">1.967,91</span>
    <span className="text-[#d0304f]">1.967,09</span>
    <span className="text-[#3a3ab5]">1.960,09</span>
  </div>
)

const Workspace = () => (
  <main className="relative flex min-w-0 flex-1 flex-col overflow-hidden border border-[#bccbd3] bg-white">
    <div className="flex h-[23px] shrink-0 items-center border-b-2 border-[#c4526b] bg-linear-to-b from-[#def1f8] to-[#cadde7]">
      <Cell className="w-[86px] gap-1">10 k unidades <Caret /></Cell>
      <Cell className="w-[90px] gap-1"><IndicatorIcon /> Indicadores</Cell>
      <Cell label="Más indicadores" className="w-3"><Caret /></Cell>
      <button type="button" aria-label="Información" className="ml-1.5"><InfoIcon /></button>
      <Cell label="Actualizar" className="ml-auto w-[22px] border-l"><RefreshIcon /></Cell>
      <WindowButtons restored />
    </div>

    <div className="flex min-h-0 flex-1">
      <div className="relative min-w-0 flex-1 border-r border-[#8d999f]">
        <MainPlot />
        <Legend />
        <p className="absolute top-0.5 right-2 text-right text-[19px] leading-6 text-[#dadada]">Oro Cash<br />Forex</p>
        <div className="absolute bottom-[158px] left-0 flex h-4 items-center gap-1 border-r border-b border-[#b4c2ca] bg-[#e2ebf1] px-[3px] text-[10px] text-[#44494c]">
          <span>(f f)</span>
          <span className="text-[#e03a3a]">-19,686</span>
          <span>-7,6974</span>
          <span className="text-[#e03a3a]">-70,304</span>
          <span>-43,334</span>
          <span>-20</span>
          <span>-80</span>
          <span className="text-[#3a3ab5]">-50</span>
          <span>0</span>
          <span>-100</span>
          <span>0</span>
        </div>
      </div>
      <div className="w-11 shrink-0">
        <Scale items={MAIN_SCALE} offset={95} />
      </div>
    </div>
    <TimeAxis />
    <NavigationBar first />
    <div className="h-[6px] shrink-0 border-t-2 border-[#8b9eaa] bg-[#dbe6f3]" />

    <section className="absolute top-[89px] left-0 w-[398px] border-t border-r border-[#8ea4b0]">
      <ChartToolbar period="1 trimestre" demoWidth="w-[21px]" periodWidth="w-[75px]" />
    </section>
    <ToolPalette />
    <DailyWindow />
    <ConfigDialog />
  </main>
)

const App = () => (
  <div className="flex min-h-screen bg-white pt-[71px] pr-[119px] pb-[82px] font-['Liberation_Sans',Arial,sans-serif]">
    <aside className="flex w-[241px] shrink-0 flex-col items-start justify-between pb-[20px] pl-[116px]">
      <h1 className="-mt-3 font-['Open_Sans',sans-serif] text-[114px] leading-[80px] font-bold text-black">2</h1>
      <h2 className="rotate-180 font-['Liberation_Serif',serif] text-[52px] leading-[60px] font-bold text-black italic [writing-mode:vertical-rl]">
        Configurar
      </h2>
    </aside>
    <Workspace />
  </div>
)

export default App
